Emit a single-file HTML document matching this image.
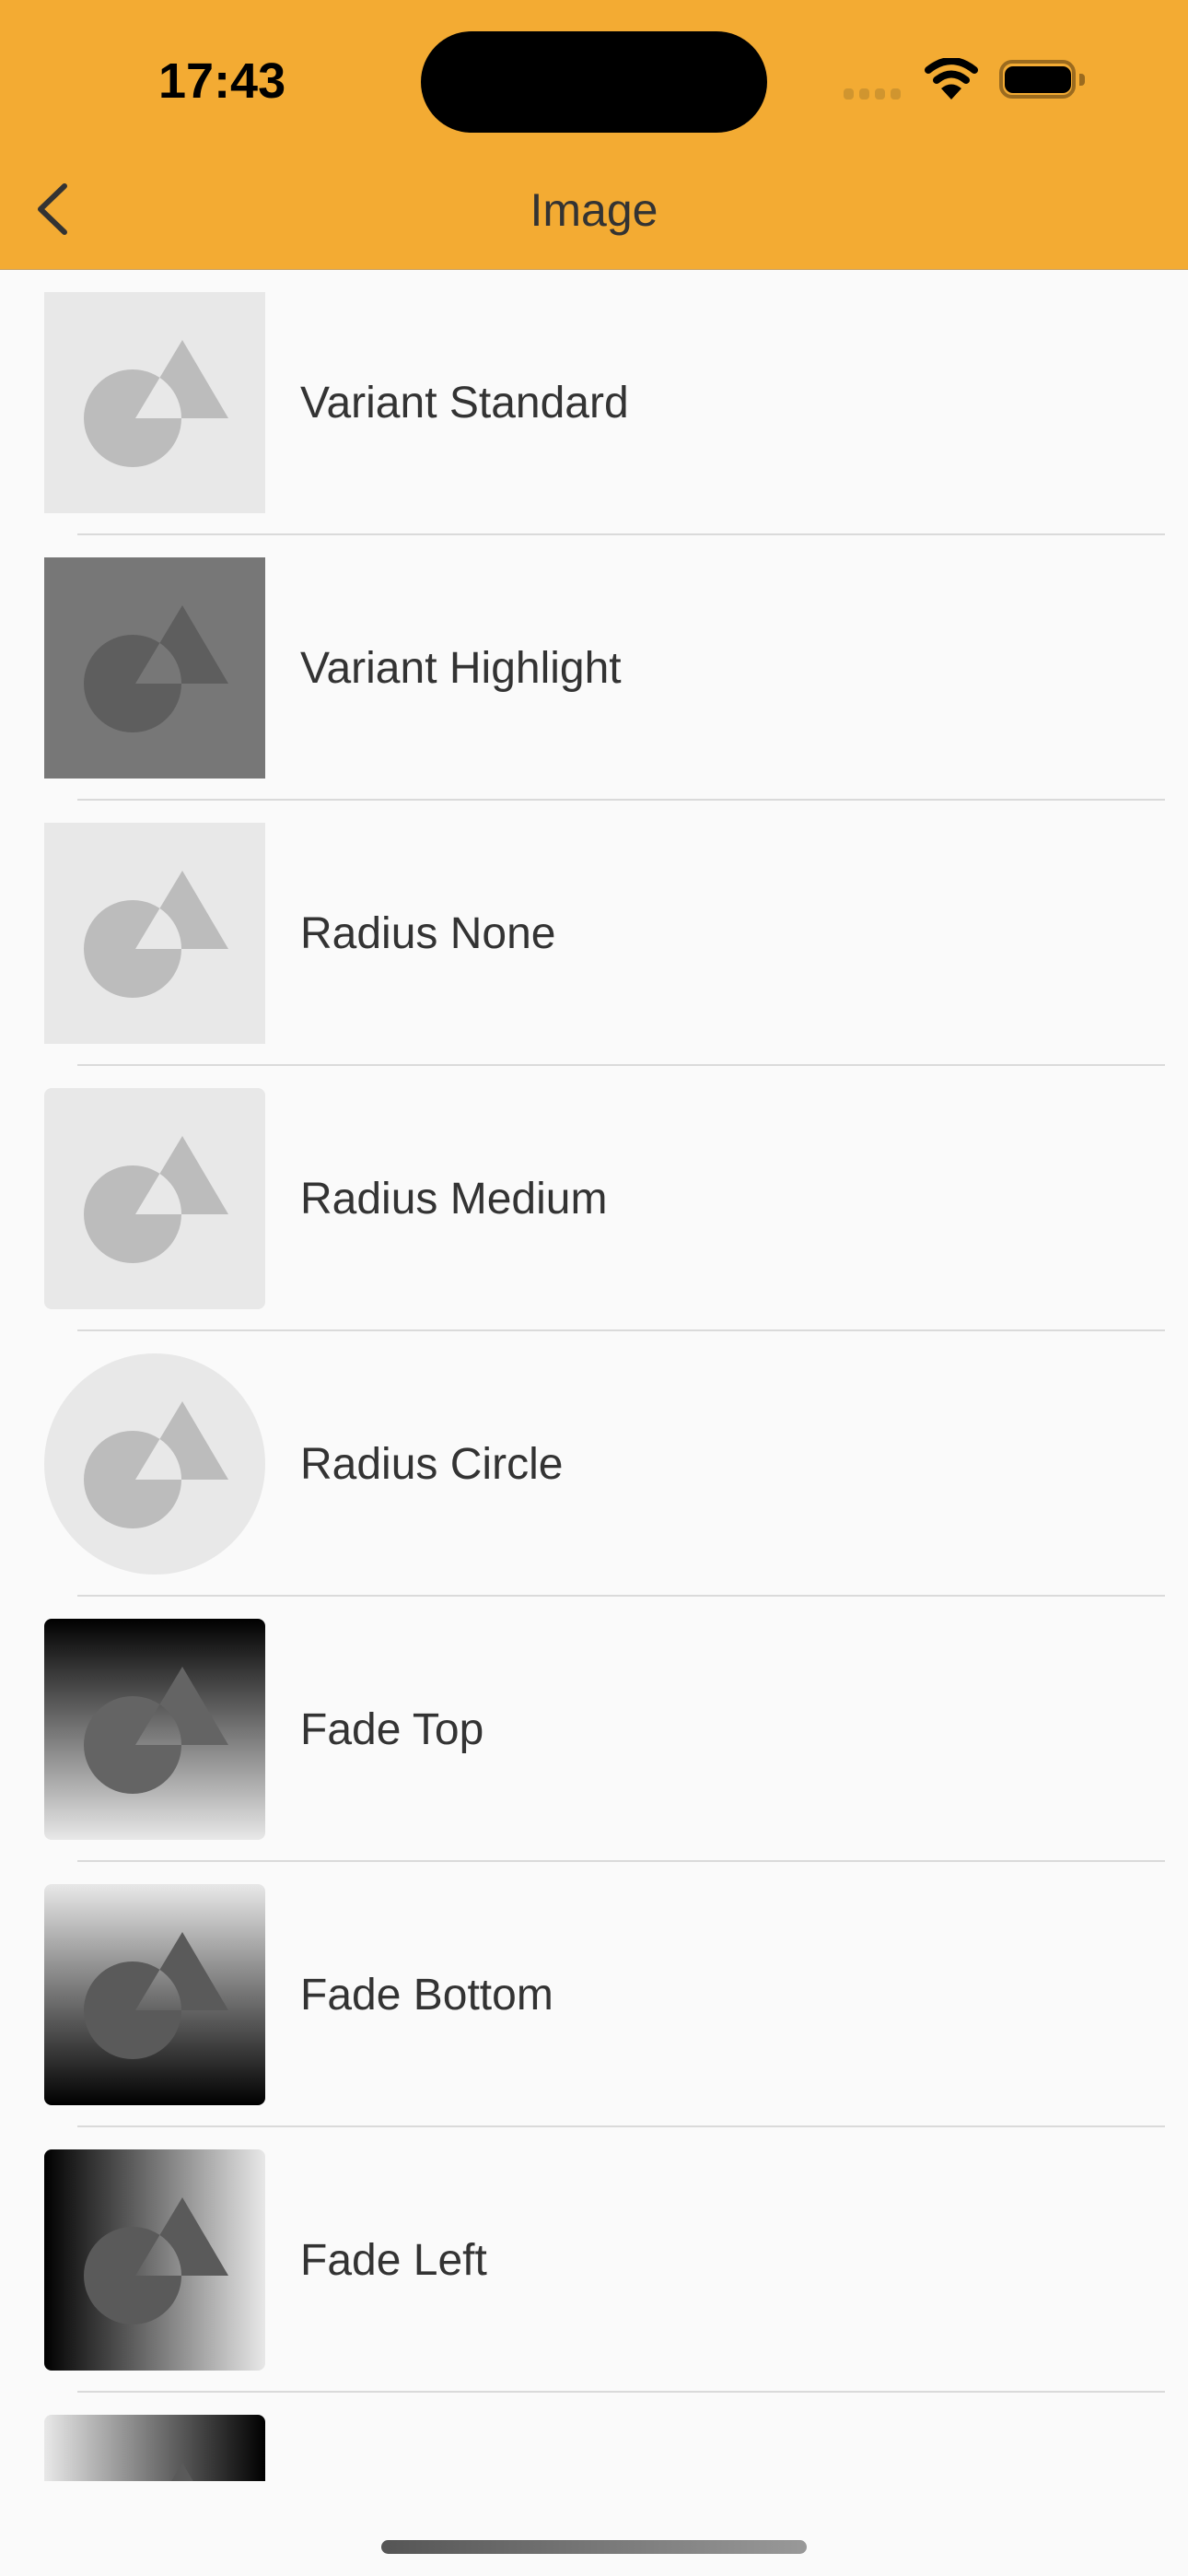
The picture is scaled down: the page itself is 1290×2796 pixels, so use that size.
<!DOCTYPE html>
<html><head><meta charset="utf-8">
<style>
*{margin:0;padding:0;box-sizing:border-box}
html,body{width:1290px;height:2796px;overflow:hidden;background:#fafafa;font-family:"Liberation Sans",sans-serif}
.hdr{position:absolute;left:0;top:0;width:1290px;height:293px;background:#f3ab33;border-bottom:1px solid #c9a060}
.time{position:absolute;left:172px;top:57px;font-size:54px;font-weight:bold;color:#000;letter-spacing:0}
.island{position:absolute;left:457px;top:34px;width:376px;height:110px;border-radius:55px;background:#000}
.title{position:absolute;left:0;width:1290px;top:199px;text-align:center;font-size:50px;color:#333}
.list{position:absolute;left:0;top:293px;width:1290px;height:2400px;overflow:hidden}
.row{position:absolute;left:0;width:1290px;height:288px}
.row .sep{position:absolute;left:84px;right:25px;bottom:0;height:2px;background:#dadada}
.thumb{position:absolute;left:48px;top:24px;width:240px;height:240px;overflow:hidden}
.thumb svg{position:absolute;left:0;top:0}
.lbl{position:absolute;left:326px;top:119px;font-size:48px;color:#333;line-height:52px}
.home{position:absolute;left:414px;top:2757px;width:462px;height:15px;border-radius:8px;background:linear-gradient(90deg,#555,#777 50%,#999)}
</style></head><body>
<div class="hdr">
<div class="time">17:43</div>
<div class="island"></div>
<svg style="position:absolute;left:914px;top:94px" width="70" height="16"><g fill="#d0952f"><rect x="2" y="2" width="11" height="12" rx="4"/><rect x="19" y="2" width="11" height="12" rx="4"/><rect x="36" y="2" width="11" height="12" rx="4"/><rect x="53" y="2" width="11" height="12" rx="4"/></g></svg>
<svg style="position:absolute;left:1002px;top:63px" width="62" height="46" viewBox="0 0 62 46"><g fill="none" stroke="#000" stroke-width="8" stroke-linecap="round"><path d="M6 13 Q31 -7 56 13"/><path d="M15 24 Q31 11 47 24"/></g><path d="M20 33 Q31 24 42 33 L31 45 Z" fill="#000"/></svg>
<div style="position:absolute;left:1085px;top:65px;width:83px;height:42px;border:4px solid #9b6b1f;border-radius:14px"></div>
<div style="position:absolute;left:1091px;top:72px;width:72px;height:29px;background:#000;border-radius:9px"></div>
<div style="position:absolute;left:1172px;top:80px;width:6px;height:13px;background:#9b6b1f;border-radius:0 4px 4px 0"></div>
<svg style="position:absolute;left:36px;top:196px" width="44" height="62" viewBox="0 0 44 62"><path d="M34 6 L8 31 L34 56" fill="none" stroke="#333" stroke-width="6" stroke-linecap="round" stroke-linejoin="round"/></svg>
<div class="title">Image</div>
</div>

<div class="list">
<div class="row" style="top:0"><div class="thumb" style="background:#e8e8e8"><svg width="240" height="240" viewBox="0 0 240 240"><path fill="#bcbcbc" fill-rule="evenodd" d="M43,137 a53,53 0 1,0 106,0 a53,53 0 1,0 -106,0 Z M150,52 L99,137 L200,137 Z"/></svg></div><div class="lbl">Variant Standard</div><div class="sep"></div></div>

<div class="row" style="top:288px"><div class="thumb" style="background:#777"><svg width="240" height="240" viewBox="0 0 240 240"><path fill="#5e5e5e" fill-rule="evenodd" d="M43,137 a53,53 0 1,0 106,0 a53,53 0 1,0 -106,0 Z M150,52 L99,137 L200,137 Z"/></svg></div><div class="lbl">Variant Highlight</div><div class="sep"></div></div>

<div class="row" style="top:576px"><div class="thumb" style="background:#e8e8e8"><svg width="240" height="240" viewBox="0 0 240 240"><path fill="#bcbcbc" fill-rule="evenodd" d="M43,137 a53,53 0 1,0 106,0 a53,53 0 1,0 -106,0 Z M150,52 L99,137 L200,137 Z"/></svg></div><div class="lbl">Radius None</div><div class="sep"></div></div>

<div class="row" style="top:864px"><div class="thumb" style="background:#e8e8e8;border-radius:8px"><svg width="240" height="240" viewBox="0 0 240 240"><path fill="#bcbcbc" fill-rule="evenodd" d="M43,137 a53,53 0 1,0 106,0 a53,53 0 1,0 -106,0 Z M150,52 L99,137 L200,137 Z"/></svg></div><div class="lbl">Radius Medium</div><div class="sep"></div></div>

<div class="row" style="top:1152px"><div class="thumb" style="background:#e8e8e8;border-radius:50%"><svg width="240" height="240" viewBox="0 0 240 240"><path fill="#bcbcbc" fill-rule="evenodd" d="M43,137 a53,53 0 1,0 106,0 a53,53 0 1,0 -106,0 Z M150,52 L99,137 L200,137 Z"/></svg></div><div class="lbl">Radius Circle</div><div class="sep"></div></div>

<div class="row" style="top:1440px"><div class="thumb" style="background:linear-gradient(180deg,#000,#e8e8e8);border-radius:8px"><svg width="240" height="240" viewBox="0 0 240 240"><path fill="#646464" fill-rule="evenodd" d="M43,137 a53,53 0 1,0 106,0 a53,53 0 1,0 -106,0 Z M150,52 L99,137 L200,137 Z"/></svg></div><div class="lbl">Fade Top</div><div class="sep"></div></div>

<div class="row" style="top:1728px"><div class="thumb" style="background:linear-gradient(0deg,#000,#e8e8e8);border-radius:8px"><svg width="240" height="240" viewBox="0 0 240 240"><path fill="#5a5a5a" fill-rule="evenodd" d="M43,137 a53,53 0 1,0 106,0 a53,53 0 1,0 -106,0 Z M150,52 L99,137 L200,137 Z"/></svg></div><div class="lbl">Fade Bottom</div><div class="sep"></div></div>

<div class="row" style="top:2016px"><div class="thumb" style="background:linear-gradient(90deg,#000,#e8e8e8);border-radius:8px"><svg width="240" height="240" viewBox="0 0 240 240"><path fill="#5a5a5a" fill-rule="evenodd" d="M43,137 a53,53 0 1,0 106,0 a53,53 0 1,0 -106,0 Z M150,52 L99,137 L200,137 Z"/></svg></div><div class="lbl">Fade Left</div><div class="sep"></div></div>

<div class="row" style="top:2304px"><div class="thumb" style="background:linear-gradient(270deg,#000,#e8e8e8);border-radius:8px"><svg width="240" height="240" viewBox="0 0 240 240"><path fill="#5a5a5a" fill-rule="evenodd" d="M43,137 a53,53 0 1,0 106,0 a53,53 0 1,0 -106,0 Z M150,52 L99,137 L200,137 Z"/></svg></div><div class="lbl">Fade Right</div><div class="sep"></div></div>
</div>
<div class="home"></div>
</body></html>
